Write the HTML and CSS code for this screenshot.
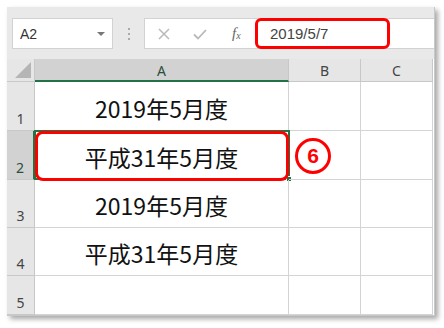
FILE: index.html
```html
<!DOCTYPE html>
<html lang="ja">
<head>
<meta charset="utf-8">
<link rel="stylesheet" href="styles.css">
</head>
<body>
<div class="window">
  <div class="toolbar">
    <div class="namebox">
      <span class="name">A2</span>
      <span class="caret"></span>
    </div>
    <div class="dots"><i></i><i></i><i></i></div>
    <div class="formula">
      <div class="btns">
        <svg class="ico" width="14" height="14" viewBox="0 0 14 14"><path d="M2 2L12 12M12 2L2 12" stroke="#b9b9b9" stroke-width="1.5" fill="none"/></svg>
        <svg class="ico" width="16" height="14" viewBox="0 0 16 14"><path d="M2 7.5L6 11.5L14 3" stroke="#b9b9b9" stroke-width="1.8" fill="none"/></svg>
        <span class="fx">f<sub>x</sub></span>
      </div>
      <div class="input">
        <span class="value">2019/5/7</span>
        <span class="mark-formula"></span>
      </div>
    </div>
  </div>
  <div class="grid">
    <div class="corner"><span class="tri"></span></div>
    <div class="colhead sel">A</div>
    <div class="colhead">B</div>
    <div class="colhead">C</div>

    <div class="rowhead">1</div>
    <div class="cell big">2019年5月度</div>
    <div class="cell"></div>
    <div class="cell"></div>

    <div class="rowhead sel">2</div>
    <div class="cell big active">平成31年5月度<span class="selbox"><span class="handle"></span></span><span class="mark-cell"></span></div>
    <div class="cell step"><span class="num">6</span></div>
    <div class="cell"></div>

    <div class="rowhead">3</div>
    <div class="cell big">2019年5月度</div>
    <div class="cell"></div>
    <div class="cell"></div>

    <div class="rowhead">4</div>
    <div class="cell big">平成31年5月度</div>
    <div class="cell"></div>
    <div class="cell"></div>

    <div class="rowhead">5</div>
    <div class="cell"></div>
    <div class="cell"></div>
    <div class="cell"></div>
  </div>
</div>
</body>
</html>
```
FILE: styles.css
```css
* { box-sizing: border-box; }
html, body { margin: 0; padding: 0; background: #fff; }
body { width: 444px; height: 328px; overflow: hidden; font-family: "Noto Sans", "Noto Sans CJK JP", sans-serif; }

.window {
  margin: 7px 0 0 7px;
  width: 428px;
  height: 309px;
  background: #fff;
  box-shadow: 3px 3px 5px rgba(0,0,0,0.35);
  display: flex;
  flex-direction: column;
  border-right: 1px solid #c8c8c8;
  border-bottom: 1px solid #c8c8c8;
}

.toolbar {
  height: 52px;
  background: #e9e9e9;
  display: flex;
  align-items: flex-start;
  padding: 11px 0 0 5px;
}
.namebox {
  width: 101px;
  height: 31px;
  background: #fff;
  border: 1px solid #d2d2d2;
  display: flex;
  align-items: center;
  justify-content: space-between;
  padding: 0 7px 0 7px;
}
.name { font-family: "Liberation Sans", sans-serif; font-size: 14px; color: #333; }
.caret { width: 0; height: 0; border-left: 4px solid transparent; border-right: 4px solid transparent; border-top: 4px solid #777; margin-top: 1px; }
.dots {
  width: 31px;
  height: 31px;
  display: flex;
  flex-direction: column;
  align-items: center;
  justify-content: center;
  gap: 3px;
}
.dots i { width: 2px; height: 2px; background: #aaa; display: block; }

.formula {
  flex: 1;
  height: 31px;
  background: #fff;
  border: 1px solid #d2d2d2;
  border-right: none;
  display: flex;
  align-items: center;
}
.btns {
  width: 110px;
  display: flex;
  align-items: center;
  padding-left: 12px;
  gap: 21px;
}
.fx { font-family: "Liberation Serif", serif; font-style: italic; font-size: 15px; color: #666; margin-left: 3px; }
.fx sub { font-size: 10px; vertical-align: baseline; position: relative; top: 1px; }
.input {
  flex: 1;
  height: 100%;
  position: relative;
  display: flex;
  align-items: center;
  padding-left: 15px;
}
.value { font-family: "Liberation Sans", sans-serif; font-size: 15px; color: #444; }
.mark-formula {
  position: absolute;
  left: 0;
  top: -1px;
  width: 135px;
  height: 31px;
  border: 3px solid #f00;
  border-radius: 6px;
}

.grid {
  display: grid;
  grid-template-columns: 28px 254px 72px 72px;
  grid-template-rows: 23px 49px 49px 48px 48px 39px;
}
.corner {
  background: #e6e6e6;
  border-right: 1px solid #c8c8c8;
  border-bottom: 1px solid #c8c8c8;
  position: relative;
}
.tri {
  position: absolute;
  right: 3px;
  bottom: 3px;
  width: 0; height: 0;
  border-left: 16px solid transparent;
  border-bottom: 16px solid #b5b5b5;
}
.colhead {
  background: #e6e6e6;
  border-right: 1px solid #c8c8c8;
  border-bottom: 1px solid #c8c8c8;
  display: flex;
  align-items: center;
  justify-content: center;
  font-family: "Noto Sans", sans-serif;
  font-size: 14px;
  color: #444;
  padding-top: 1px;
}
.colhead.sel { background: #d2d2d2; border-bottom: 2px solid #217346; color: #2a4f3a; }
.rowhead {
  background: #e6e6e6;
  border-right: 1px solid #c8c8c8;
  border-bottom: 1px solid #c8c8c8;
  display: flex;
  align-items: flex-end;
  justify-content: center;
  font-family: "Noto Sans", sans-serif;
  font-size: 14px;
  color: #444;
  padding-bottom: 2px;
}
.rowhead.sel { background: #d2d2d2; color: #2a4f3a; border-right: 2px solid #217346; }
.cell {
  border-right: 1px solid #d4d4d4;
  border-bottom: 1px solid #d4d4d4;
  position: relative;
}
.cell.big {
  display: flex;
  align-items: center;
  justify-content: center;
  font-family: "Noto Sans CJK JP", sans-serif;
  font-size: 23px;
  color: #111;
  padding-top: 3px;
}
.selbox {
  position: absolute;
  left: -1px; top: -1px; right: -2px; bottom: -1px;
  border: 2px solid #217346;
}
.handle {
  position: absolute;
  right: -4px; bottom: -4px;
  width: 6px; height: 6px;
  background: #217346;
  border: 1px solid #fff;
}
.mark-cell {
  position: absolute;
  left: 0; top: 0; right: -1px; bottom: -2px;
  border: 3px solid #f00;
  border-radius: 8px;
}
.cell.step {
  display: flex;
  align-items: center;
  padding-left: 6px;
  padding-top: 2px;
}
.num {
  width: 36px; height: 36px;
  border: 3px solid #f00;
  border-radius: 50%;
  display: flex;
  align-items: center;
  justify-content: center;
  font-family: "Liberation Sans", sans-serif;
  font-weight: bold;
  font-size: 21px;
  color: #f00;
}
```
